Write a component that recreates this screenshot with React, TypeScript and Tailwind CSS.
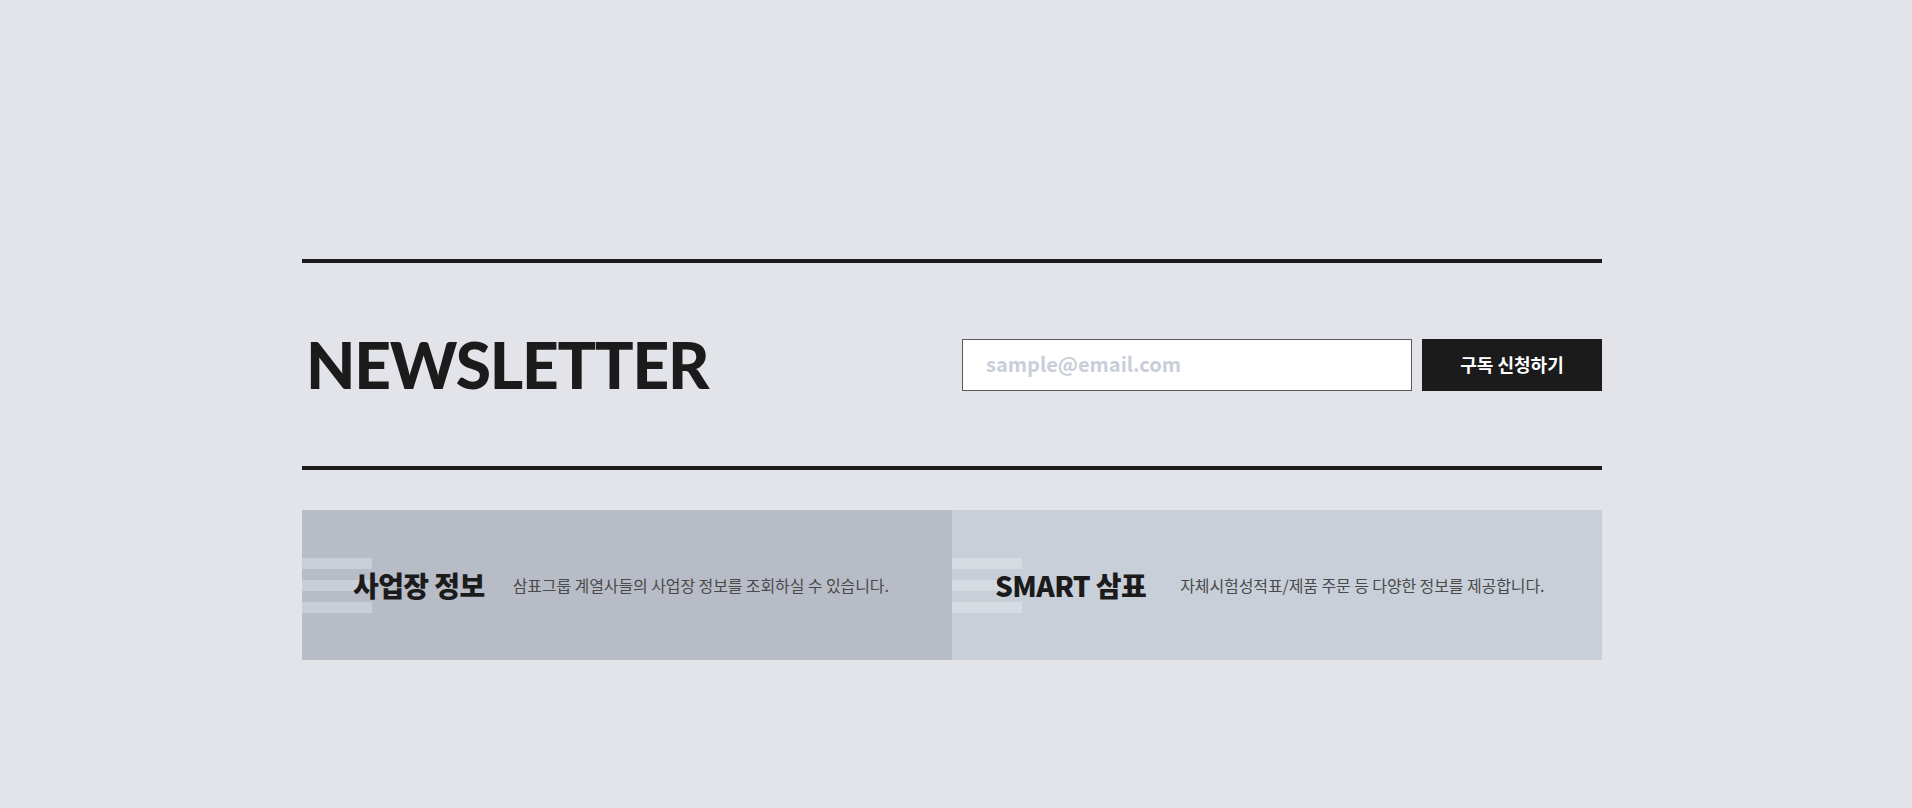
import React from 'react';

const kr = { fontFamily: '"Noto Sans CJK KR", "Noto Sans", sans-serif' };

interface InfoPanelProps {
  title: string;
  desc: string;
  panelClass: string;
  barClass: string;
  titlePad: string;
  descGap: string;
}

const InfoPanel = ({ title, desc, panelClass, barClass, titlePad, descGap }: InfoPanelProps) => (
  <div className={`relative flex items-center h-[150px] flex-1 ${panelClass}`}>
    {/* decorative stripes behind the title */}
    <div className="absolute left-0 top-[48px] flex flex-col gap-[11px]">
      <span className={`block w-[70px] h-[11px] ${barClass}`} />
      <span className={`block w-[70px] h-[11px] ${barClass}`} />
      <span className={`block w-[70px] h-[11px] ${barClass}`} />
    </div>
    <div className={`relative flex items-center ${titlePad}`}>
      <h3 className="text-[28px] font-black text-[#1b1b1b] leading-none tracking-[-0.6px]">{title}</h3>
      <p className={`text-[16px] text-[#4a4a4a] leading-none tracking-[-0.1px] ${descGap}`}>{desc}</p>
    </div>
  </div>
);

export default function App() {
  return (
    <div className="min-h-[808px] w-full bg-[#e3e4e9] pt-[259px]" style={kr}>
      <div className="ml-[302px] w-[1300px]">
        <div className="h-[4px] bg-[#1b1b1b]" />
        <div className="flex items-center justify-between h-[203px]">
          <h2
            className="text-[64px] font-black text-[#1b1b1b] leading-none tracking-[-1.2px] pl-[4px]"
            style={{ fontFamily: 'Lato, "Noto Sans", sans-serif' }}
          >
            NEWSLETTER
          </h2>
          <form className="flex gap-[10px]" onSubmit={(e) => e.preventDefault()}>
            <input
              type="email"
              placeholder="sample@email.com"
              className="w-[450px] h-[52px] bg-white border border-[#5a5a5a] px-[23px] pb-[3px] text-[20px] font-semibold text-[#333] placeholder:text-[#c9ced9] outline-none"
            />
            <button
              type="submit"
              className="w-[180px] h-[52px] bg-[#1b1b1b] text-white text-[18px] font-bold"
            >
              구독 신청하기
            </button>
          </form>
        </div>
        <div className="h-[4px] bg-[#1b1b1b]" />
        <div className="flex mt-[40px]">
          <InfoPanel
            title="사업장 정보"
            desc="삼표그룹 계열사들의 사업장 정보를 조회하실 수 있습니다."
            panelClass="bg-[#b8bcc7]"
            barClass="bg-[#c9cfd9]"
            titlePad="pl-[51px]"
            descGap="ml-[28px]"
          />
          <InfoPanel
            title="SMART 삼표"
            desc="자체시험성적표/제품 주문 등 다양한 정보를 제공합니다."
            panelClass="bg-[#c9cfd9]"
            barClass="bg-[#d6dae1]"
            titlePad="pl-[43px]"
            descGap="ml-[34px]"
          />
        </div>
      </div>
    </div>
  );
}
